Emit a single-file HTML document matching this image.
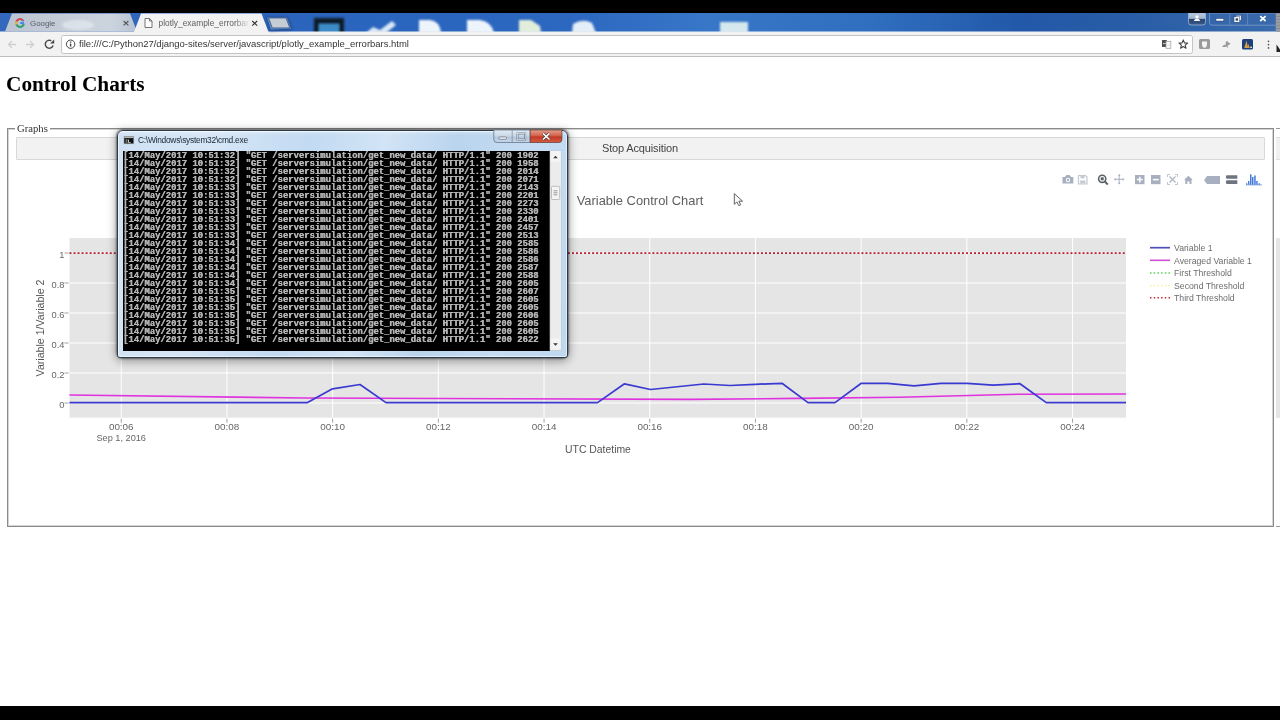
<!DOCTYPE html>
<html><head><meta charset="utf-8">
<style>
*{margin:0;padding:0;box-sizing:border-box}
html,body{width:1280px;height:720px;overflow:hidden;background:#fff;font-family:"Liberation Sans",sans-serif}
.a{position:absolute;will-change:transform}
#topbar{left:0;top:0;width:1280px;height:13px;background:#000}
#botbar{left:0;top:706px;width:1280px;height:14px;background:#000}
#chrome{left:0;top:13px;width:1280px;height:44px}
#page{left:0;top:57px;width:1280px;height:649px;background:#fff}
.url{left:79.2px;top:37px;font-size:9.48px;color:#333;white-space:nowrap;line-height:14px}
</style></head><body>
<div id="topbar" class="a"></div>
<svg id="chrome" class="a" width="1280" height="44" viewBox="0 13 1280 44">
 <defs>
  <linearGradient id="bl" x1="0" x2="1" y1="0" y2="0">
   <stop offset="0" stop-color="#3468bc"/><stop offset="0.25" stop-color="#2a64bc"/><stop offset="0.45" stop-color="#2c68c0"/>
   <stop offset="0.55" stop-color="#3876c8"/><stop offset="0.68" stop-color="#306ec0"/><stop offset="0.8" stop-color="#2258a8"/><stop offset="0.9" stop-color="#2a5ea6"/><stop offset="1" stop-color="#3a6cae"/>
  </linearGradient>
  <linearGradient id="gt" x1="0" x2="1" y1="0" y2="0">
   <stop offset="0" stop-color="#bcc4d2"/><stop offset="0.4" stop-color="#c4ccd8"/><stop offset="0.6" stop-color="#c8d0dc"/><stop offset="0.8" stop-color="#ccd4de"/><stop offset="1" stop-color="#b8c2d2"/>
  </linearGradient>
  <linearGradient id="fade" x1="0" x2="1">
   <stop offset="0.8" stop-color="#606060" stop-opacity="1"/><stop offset="0.97" stop-color="#606060" stop-opacity="0"/>
  </linearGradient>
 </defs>
 <rect x="0" y="13" width="1280" height="19" fill="url(#bl)"/>
 <!-- desktop blobs -->
 <filter id="bz" x="-20%" y="-20%" width="140%" height="140%"><feGaussianBlur stdDeviation="1.1"/></filter>
 <g filter="url(#bz)">
 <rect x="314" y="18" width="30" height="15" fill="#101c2c"/>
 <rect x="319" y="24" width="20" height="9" fill="#3c8cc8"/>
 <path d="M366 33 L373 27 L380 30 L392 21 L396 25 L386 33 Z" fill="#dce8f6"/>
 <path d="M419 33 L419 20 L430 20 Q440 21 441 33 Z" fill="#eef4fb"/>
 <path d="M467 33 L467 20 L480 20 Q492 22 494 33 Z" fill="#eef4fb"/>
 <path d="M519 33 L519 20 L531 20 L540 26 L541 33 Z" fill="#e2eedc"/>
 <path d="M572 33 L573 24 Q583 18 592 23 L596 33 Z" fill="#e4eef8"/>
 <rect x="720" y="22" width="28" height="11" fill="#d4e8ee"/>
 </g>
 <!-- toolbar -->
 <rect x="0" y="31.5" width="1280" height="25" fill="#f2f2f2"/>
 <rect x="0" y="56" width="1280" height="1" fill="#bdbdbd"/>
 <rect x="61.5" y="35.5" width="1131" height="18" rx="2" fill="#fff" stroke="#c4c4c4" stroke-width="1"/>
 <!-- google tab -->
 <path d="M5 31.5 L12 13.5 L130 13.5 L137 31.5 Z" fill="url(#gt)"/>
 <ellipse cx="78" cy="25" rx="16" ry="5" fill="#e4eaf0" opacity="0.7" filter="url(#bz)"/>
 <!-- active tab -->
 <path d="M134 32 L141 13.5 L261.5 13.5 L268.5 32 Z" fill="#f2f2f2"/>
 <!-- new tab -->
 <path d="M265.5 16.5 L288 16.5 L292.5 30 L270 31.5 Z" fill="#1e3c70" opacity="0.55" filter="url(#bz)"/>
 <path d="M267 17.5 L287 17.5 L291 28.8 L270.8 29.5 Z" fill="#7fa6d8" opacity="0.7"/>
 <path d="M268.6 18 L286 18 L289.8 27.9 L272.3 27.9 Z" fill="#c6ccd6" stroke="#2a4a80" stroke-width="0.7"/>
 <!-- google icon -->
 <g transform="translate(20,23)" fill="none" stroke-width="1.9">
  <path d="M3.6 -1.6 A3.9 3.9 0 1 0 3.9 0.6" stroke="#4285f4"/>
  <path d="M-3.6 -1.5 A3.9 3.9 0 0 1 2.8 -2.7" stroke="#ea4335"/>
  <path d="M-3.5 1.7 A3.9 3.9 0 0 1 -3.6 -1.5" stroke="#fbbc05"/>
  <path d="M3.7 1.2 A3.9 3.9 0 0 1 -3.5 1.7" stroke="#34a853"/>
  <path d="M0.2 0 H3.9" stroke="#4285f4"/>
 </g>
 <text x="30" y="26" font-size="7.9" fill="#5a5e66" font-family="Liberation Sans">Google</text>
 <path d="M123.6 21 L128.4 25.4 M128.4 21 L123.6 25.4" stroke="#555" stroke-width="1.1"/>
 <!-- active tab contents -->
 <path d="M145 18.5 H149.5 L152 21 V27.5 H145 Z M149.5 18.5 V21 H152" fill="#fff" stroke="#666" stroke-width="0.9"/>
 <text x="158.5" y="26" font-size="8.4" fill="url(#fade)" font-family="Liberation Sans">plotly_example_errorbars</text>
 <path d="M252.2 21 L257.2 25.6 M257.2 21 L252.2 25.6" stroke="#333" stroke-width="1.1"/>
 <!-- nav -->
 <path d="M16 44.5 H8.8 M12 41 L8.5 44.5 L12 48" fill="none" stroke="#d0d0d0" stroke-width="1.4"/>
 <path d="M26 44.5 H33.2 M30 41 L33.5 44.5 L30 48" fill="none" stroke="#d0d0d0" stroke-width="1.4"/>
 <path d="M53.06 45.57 A4 4 0 1 1 51.3 40.74" fill="none" stroke="#464646" stroke-width="1.4"/>
 <path d="M50.2 43.4 L54.2 43.4 L54.2 39.4 Z" fill="#464646"/>
 <circle cx="70.6" cy="44.2" r="4.2" fill="none" stroke="#444" stroke-width="1.0"/>
 <rect x="69.9" y="43.6" width="1.4" height="3" fill="#444"/><rect x="69.9" y="41.5" width="1.4" height="1.2" fill="#444"/>
 <!-- right icons -->
 <rect x="1162" y="40" width="4.8" height="7" fill="#505050"/>
 <rect x="1166" y="41.3" width="4.8" height="7" fill="#fafafa" stroke="#999" stroke-width="0.7"/><path d="M1163 43.5 h2.8 M1167 45 h3" stroke="#ddd" stroke-width="0.8"/>
 <path d="M1183.30 39.90 L1184.48 42.88 L1187.67 43.08 L1185.20 45.12 L1186.00 48.22 L1183.30 46.50 L1180.60 48.22 L1181.40 45.12 L1178.93 43.08 L1182.12 42.88 Z" fill="none" stroke="#444" stroke-width="1.1" stroke-linejoin="round"/>
 <rect x="1199" y="39" width="11" height="10" rx="1.5" fill="#9a9a9a"/>
 <path d="M1202 41.5 H1207 V44.5 Q1207 47 1204.5 48 Q1202 47 1202 44.5 Z" fill="#f4f4f4"/>
 <path d="M1222 46.5 Q1224.5 44 1226 44.5 L1225.5 42 Q1227.5 40.5 1228.5 42.5 L1230.5 43.5 Q1229 45.5 1227.5 45.5 L1228 48 L1226 46.5 Q1224 47.5 1222 46.5 Z" fill="#9a9a9a"/>
 <rect x="1242" y="39" width="11" height="10.5" rx="1.5" fill="#1f3f78"/>
 <path d="M1244.3 48 L1246.5 40.5 L1248.2 48 Z M1247.6 48 L1248.6 43.5 L1249.6 48 Z" fill="#d8a040"/><rect x="1250.3" y="46.6" width="1.6" height="1.4" fill="#eee"/>
 <circle cx="1268.5" cy="41.3" r="0.85" fill="#555"/><circle cx="1268.5" cy="44.6" r="0.85" fill="#555"/><circle cx="1268.5" cy="47.9" r="0.85" fill="#555"/>
 <path d="M1276.5 44.5 L1280 49.5 L1280 52 L1276.5 52 Z" fill="#222"/>
 <!-- window controls -->
 <defs><linearGradient id="pb" x1="0" x2="0" y1="0" y2="1"><stop offset="0" stop-color="#b8c8dc"/><stop offset="0.45" stop-color="#a4b8d0"/><stop offset="0.5" stop-color="#2a4470"/><stop offset="1" stop-color="#3a5a88"/></linearGradient></defs>
 <path d="M1188.5 13 L1205.5 13 L1205.5 22.5 Q1205.5 25 1203 25 L1191 25 Q1188.5 25 1188.5 22.5 Z" fill="url(#pb)" stroke="#9fb8d8" stroke-width="0.8"/>
 <circle cx="1197" cy="16.9" r="1.6" fill="#fff"/>
 <path d="M1193.8 21 Q1194.5 18.8 1197 18.8 Q1199.5 18.8 1200.2 21 Z" fill="#fff"/>
 <path d="M1209.5 13 L1280 13 L1280 25.2 L1212 25.2 Q1209.5 25.2 1209.5 22.7 Z" fill="#3a68a8" fill-opacity="0.5" stroke="#86a6d0" stroke-width="0.7"/>
 <line x1="1229.8" y1="13.5" x2="1229.8" y2="24.8" stroke="#7c9cc8" stroke-width="0.6"/>
 <line x1="1247.6" y1="13.5" x2="1247.6" y2="24.8" stroke="#7c9cc8" stroke-width="0.6"/>
 <rect x="1216" y="18.6" width="7.8" height="2.4" fill="#f4f8fc" stroke="#1e3a60" stroke-width="0.4"/>
 <rect x="1236" y="15.2" width="5.2" height="5.2" fill="#dfe8f2" stroke="#203a60" stroke-width="0.4"/>
 <rect x="1234" y="16.8" width="5.6" height="5.4" fill="#eef3f8" stroke="#203a60" stroke-width="0.4"/>
 <rect x="1235.7" y="18.4" width="2.3" height="2.2" fill="#2a3a50"/>
 <path d="M1260.2 16.2 L1265.6 21 M1265.6 16.2 L1260.2 21" stroke="#fff" stroke-width="1.7"/>
 <rect x="1275.7" y="13" width="4.3" height="18.5" fill="#8a8e94"/><path d="M1276 15h4M1276 18h4M1276 21h4M1276 24h4M1276 27h4M1276 30h4" stroke="#a8acb0" stroke-width="1"/>
</svg>
<div id="page" class="a"></div>
<div class="a url">file:///C:/Python27/django-sites/server/javascript/plotly_example_errorbars.html</div>
<div class="a" style="left:6px;top:72px;font-family:'Liberation Serif',serif;font-weight:bold;font-size:21.3px;line-height:24px;color:#000;white-space:nowrap">Control Charts</div>
<div class="a" style="left:7px;top:128px;width:1267px;height:399px;border:1px solid #8a8a8a;box-shadow:inset 0 0 0 1px #d4d4d4"></div>
<div class="a" style="left:15px;top:121px;padding:0 2px;background:#fff;font-family:'Liberation Serif',serif;font-size:10.7px;line-height:14px;color:#333;white-space:nowrap">Graphs</div>
<div class="a" style="left:16px;top:137px;width:1249px;height:23px;background:#f2f2f2;border:1px solid #d8d8d8;border-radius:1px"></div>
<div class="a" style="left:602px;top:141px;font-size:11px;line-height:14px;color:#444;white-space:nowrap;letter-spacing:-0.15px">Stop Acquisition</div>
<div class="a" style="left:1276px;top:128px;width:4px;height:1px;background:#999"></div>
<div class="a" style="left:1276px;top:526px;width:4px;height:1px;background:#999"></div>
<div class="a" style="left:1276px;top:137px;width:4px;height:23px;background:#f0f0f0;border-top:1px solid #ddd;border-bottom:1px solid #ddd"></div>
<div class="a" style="left:1276px;top:238px;width:4px;height:180px;background:#e5e5e5"></div>
<svg class="a" style="left:0;top:0" width="1280" height="720" viewBox="0 0 1280 720">
<rect x="69.5" y="238" width="1056.5" height="179.7" fill="#e5e5e5"/>
<line x1="121.25" y1="238" x2="121.25" y2="417.7" stroke="#fff" stroke-width="1"/>
<line x1="121.25" y1="418.7" x2="121.25" y2="422.7" stroke="#444" stroke-width="1" opacity="0.5"/>
<line x1="226.95" y1="238" x2="226.95" y2="417.7" stroke="#fff" stroke-width="1"/>
<line x1="226.95" y1="418.7" x2="226.95" y2="422.7" stroke="#444" stroke-width="1" opacity="0.5"/>
<line x1="332.65" y1="238" x2="332.65" y2="417.7" stroke="#fff" stroke-width="1"/>
<line x1="332.65" y1="418.7" x2="332.65" y2="422.7" stroke="#444" stroke-width="1" opacity="0.5"/>
<line x1="438.35" y1="238" x2="438.35" y2="417.7" stroke="#fff" stroke-width="1"/>
<line x1="438.35" y1="418.7" x2="438.35" y2="422.7" stroke="#444" stroke-width="1" opacity="0.5"/>
<line x1="544.05" y1="238" x2="544.05" y2="417.7" stroke="#fff" stroke-width="1"/>
<line x1="544.05" y1="418.7" x2="544.05" y2="422.7" stroke="#444" stroke-width="1" opacity="0.5"/>
<line x1="649.75" y1="238" x2="649.75" y2="417.7" stroke="#fff" stroke-width="1"/>
<line x1="649.75" y1="418.7" x2="649.75" y2="422.7" stroke="#444" stroke-width="1" opacity="0.5"/>
<line x1="755.45" y1="238" x2="755.45" y2="417.7" stroke="#fff" stroke-width="1"/>
<line x1="755.45" y1="418.7" x2="755.45" y2="422.7" stroke="#444" stroke-width="1" opacity="0.5"/>
<line x1="861.15" y1="238" x2="861.15" y2="417.7" stroke="#fff" stroke-width="1"/>
<line x1="861.15" y1="418.7" x2="861.15" y2="422.7" stroke="#444" stroke-width="1" opacity="0.5"/>
<line x1="966.85" y1="238" x2="966.85" y2="417.7" stroke="#fff" stroke-width="1"/>
<line x1="966.85" y1="418.7" x2="966.85" y2="422.7" stroke="#444" stroke-width="1" opacity="0.5"/>
<line x1="1072.55" y1="238" x2="1072.55" y2="417.7" stroke="#fff" stroke-width="1"/>
<line x1="1072.55" y1="418.7" x2="1072.55" y2="422.7" stroke="#444" stroke-width="1" opacity="0.5"/>
<line x1="69.5" y1="403.00" x2="1126" y2="403.00" stroke="#fff" stroke-width="1"/>
<line x1="64.5" y1="403.00" x2="68.5" y2="403.00" stroke="#444" stroke-width="1" opacity="0.5"/>
<text x="64.5" y="406.30" text-anchor="end" font-size="9.3" fill="#666" dy="1.2">0</text>
<line x1="69.5" y1="373.00" x2="1126" y2="373.00" stroke="#fff" stroke-width="1"/>
<line x1="64.5" y1="373.00" x2="68.5" y2="373.00" stroke="#444" stroke-width="1" opacity="0.5"/>
<text x="64.5" y="376.30" text-anchor="end" font-size="9.3" fill="#666" dy="1.2">0.2</text>
<line x1="69.5" y1="343.00" x2="1126" y2="343.00" stroke="#fff" stroke-width="1"/>
<line x1="64.5" y1="343.00" x2="68.5" y2="343.00" stroke="#444" stroke-width="1" opacity="0.5"/>
<text x="64.5" y="346.30" text-anchor="end" font-size="9.3" fill="#666" dy="1.2">0.4</text>
<line x1="69.5" y1="313.00" x2="1126" y2="313.00" stroke="#fff" stroke-width="1"/>
<line x1="64.5" y1="313.00" x2="68.5" y2="313.00" stroke="#444" stroke-width="1" opacity="0.5"/>
<text x="64.5" y="316.30" text-anchor="end" font-size="9.3" fill="#666" dy="1.2">0.6</text>
<line x1="69.5" y1="283.00" x2="1126" y2="283.00" stroke="#fff" stroke-width="1"/>
<line x1="64.5" y1="283.00" x2="68.5" y2="283.00" stroke="#444" stroke-width="1" opacity="0.5"/>
<text x="64.5" y="286.30" text-anchor="end" font-size="9.3" fill="#666" dy="1.2">0.8</text>
<line x1="69.5" y1="253.00" x2="1126" y2="253.00" stroke="#fff" stroke-width="1"/>
<line x1="64.5" y1="253.00" x2="68.5" y2="253.00" stroke="#444" stroke-width="1" opacity="0.5"/>
<text x="64.5" y="256.30" text-anchor="end" font-size="9.3" fill="#666" dy="1.2">1</text>
<text x="121.25" y="429.7" text-anchor="middle" font-size="9.9" fill="#666">00:06</text>
<text x="226.95" y="429.7" text-anchor="middle" font-size="9.9" fill="#666">00:08</text>
<text x="332.65" y="429.7" text-anchor="middle" font-size="9.9" fill="#666">00:10</text>
<text x="438.35" y="429.7" text-anchor="middle" font-size="9.9" fill="#666">00:12</text>
<text x="544.05" y="429.7" text-anchor="middle" font-size="9.9" fill="#666">00:14</text>
<text x="649.75" y="429.7" text-anchor="middle" font-size="9.9" fill="#666">00:16</text>
<text x="755.45" y="429.7" text-anchor="middle" font-size="9.9" fill="#666">00:18</text>
<text x="861.15" y="429.7" text-anchor="middle" font-size="9.9" fill="#666">00:20</text>
<text x="966.85" y="429.7" text-anchor="middle" font-size="9.9" fill="#666">00:22</text>
<text x="1072.55" y="429.7" text-anchor="middle" font-size="9.9" fill="#666">00:24</text>
<text x="121.2" y="440.8" text-anchor="middle" font-size="9.2" fill="#666">Sep 1, 2016</text>
<text x="598" y="453" text-anchor="middle" font-size="10.4" fill="#555">UTC Datetime</text>
<text transform="translate(44,328) rotate(-90)" text-anchor="middle" font-size="10.6" fill="#555">Variable 1/Variable 2</text>
<text x="640" y="205" text-anchor="middle" font-size="12.9" fill="#5e5e5e">Variable Control Chart</text>
<line x1="69.5" y1="253.1" x2="1126" y2="253.1" stroke="#b82030" stroke-width="1.9" stroke-dasharray="2 2.02"/>
<polyline fill="none" stroke="#e033e0" stroke-width="1.6" points="69.5,395 305,398 690,399.4 800,398.4 900,397.2 1020,394.2 1126,394"/>
<polyline fill="none" stroke="#3a3ad0" stroke-width="1.7" stroke-linejoin="round" points="69.5,402.6 307.5,402.6 332.5,388.8 360,384.5 386,402.6 597.5,402.6 624.5,383.8 650.5,389.5 703.8,384 730,385.5 755,384.3 782,383.3 808,402.6 835,402.6 861.3,383.3 887.5,383.3 914,385.8 941,383.4 967,383.4 993,385.2 1020,383.7 1046.3,402.6 1126,402.6"/>
<line x1="1150" y1="247.7" x2="1170" y2="247.7" stroke="#5050b8" stroke-width="1.7"/>
<line x1="1150" y1="260.3" x2="1170" y2="260.3" stroke="#d050d8" stroke-width="1.6"/>
<line x1="1150" y1="273" x2="1170" y2="273" stroke="#58d058" stroke-width="1.4" stroke-dasharray="1.5 2.2"/>
<line x1="1150" y1="285.6" x2="1170" y2="285.6" stroke="#f4f090" stroke-width="1.4" stroke-dasharray="1.5 2.2"/>
<line x1="1150" y1="297.8" x2="1170" y2="297.8" stroke="#c83038" stroke-width="1.5" stroke-dasharray="1.5 2.2"/>
<text x="1174" y="250.9" font-size="8.7" fill="#6c6c6c">Variable 1</text>
<text x="1174" y="263.5" font-size="8.7" fill="#6c6c6c">Averaged Variable 1</text>
<text x="1174" y="276.2" font-size="8.7" fill="#6c6c6c">First Threshold</text>
<text x="1174" y="288.8" font-size="8.7" fill="#6c6c6c">Second Threshold</text>
<text x="1174" y="301.0" font-size="8.7" fill="#6c6c6c">Third Threshold</text>
</svg>
<svg class="a" style="left:0;top:0" width="1280" height="720" viewBox="0 0 1280 720">
 <!-- camera -->
 <path d="M1062.5 177 H1065 L1066.5 175 H1069.5 L1071 177 H1073.3 V183.5 H1062.5 Z" fill="#a8b0c0"/>
 <circle cx="1068" cy="180" r="2.2" fill="#fff"/><circle cx="1068" cy="180" r="1.2" fill="#a8b0c0"/>
 <!-- save -->
 <path d="M1078.5 175.5 H1085.5 L1087 177 V184 H1078.5 Z" fill="none" stroke="#c4c8d0" stroke-width="1.2"/>
 <rect x="1080.5" y="175.8" width="4" height="2.5" fill="#c4c8d0"/><rect x="1080.2" y="180.5" width="5.2" height="3" fill="#c4c8d0"/>
 <!-- zoom -->
 <circle cx="1102.2" cy="178.8" r="3.6" fill="none" stroke="#5c6068" stroke-width="1.6"/>
 <rect x="1100.7" y="177.3" width="3" height="3" fill="#5c6068"/>
 <path d="M1104.8 181.5 L1107.8 184.5" stroke="#5c6068" stroke-width="1.9"/>
 <!-- pan -->
 <path d="M1119.2 174.5 V184 M1114.5 179.3 H1124" stroke="#a8b0c0" stroke-width="1"/>
 <path d="M1119.2 174 L1117.8 175.8 H1120.6 Z M1119.2 184.5 L1117.8 182.7 H1120.6 Z M1114 179.3 L1115.8 177.9 V180.7 Z M1124.5 179.3 L1122.7 177.9 V180.7 Z" fill="#a8b0c0"/>
 <!-- zoom in -->
 <rect x="1135" y="175" width="9.5" height="9.2" fill="#a8b0c0"/>
 <path d="M1139.75 176.8 V182.4 M1136.9 179.6 H1142.6" stroke="#fff" stroke-width="1.5"/>
 <!-- zoom out -->
 <rect x="1151" y="175" width="9.5" height="9.2" fill="#a8b0c0"/>
 <path d="M1152.9 179.6 H1158.6" stroke="#fff" stroke-width="1.5"/>
 <!-- autoscale -->
 <path d="M1167.5 177 V174.5 H1170 M1175 174.5 H1177.5 V177 M1177.5 182 V184.5 H1175 M1170 184.5 H1167.5 V182" fill="none" stroke="#b8bec8" stroke-width="0.9"/>
 <path d="M1169.5 176.5 L1175.5 182.5 M1175.5 176.5 L1169.5 182.5" stroke="#b0b8c4" stroke-width="1.3"/>
 <!-- home -->
 <path d="M1184 180 L1188.4 175.8 L1192.8 180 H1191.5 V184 H1189.5 V181.5 H1187.3 V184 H1185.3 V180 Z" fill="#a8b0c0"/>
 <!-- spike/tag -->
 <path d="M1204 180.2 L1207 176 H1220 V184 H1207 Z" fill="#a8b0c0"/>
 <!-- compare -->
 <path d="M1226.5 175.3 H1237.3 V178.8 H1226.5 L1225.8 177 Z M1226.5 180.3 H1237.3 V184 H1226.5 L1225.8 182.2 Z" fill="#6e7480"/>
 <!-- plotly logo -->
 <g fill="#447adb">
  <rect x="1246" y="183.3" width="1.4" height="1.5"/>
  <rect x="1248" y="181" width="1.4" height="3.8"/>
  <rect x="1250" y="174.3" width="1.5" height="10.5"/>
  <rect x="1252" y="177" width="1.5" height="7.8"/>
  <rect x="1254.2" y="175.5" width="1.5" height="9.3"/>
  <rect x="1256.2" y="181" width="1.4" height="3.8"/>
  <rect x="1258.5" y="183.3" width="1.4" height="1.5"/>
 </g>
 <rect x="1246" y="184.5" width="16" height="0.8" fill="#6a90d8"/>
 <!-- cursor -->
 <path d="M734.3 193.6 V204.3 L736.9 202 L738.8 205.6 L740.7 204.8 L738.9 201.2 H742.6 Z" fill="#f8f8f8" stroke="#555" stroke-width="0.9" stroke-linejoin="round"/>
</svg>
<div class="a" style="left:117px;top:129.5px;width:451px;height:227.5px;border-radius:6px;box-shadow:0 0 2px 1px rgba(0,0,0,0.45),0 2px 8px 2px rgba(0,0,0,0.3)"></div>
<div class="a" style="left:117px;top:129.5px;width:451px;height:227.5px;border-radius:6px 6px 3px 3px;border:1px solid #2c3a4a;background:linear-gradient(180deg,rgba(255,255,255,0.35) 0px,rgba(255,255,255,0) 4px),linear-gradient(100deg,#cfe1f3 0%,#d6e6f6 20%,#c2daf2 40%,#d2e4f6 55%,#bad4ee 70%,#c6ddf3 85%,#bed8f0 100%)"></div>
<div class="a" style="left:118px;top:130.5px;width:449px;height:225.5px;border-radius:5px 5px 2px 2px;border:1px solid rgba(255,255,255,0.55)"></div>
<div class="a" style="left:123px;top:150.5px;width:427px;height:200px;background:#000"></div>
<svg class="a" style="left:0;top:0" width="1280" height="720" viewBox="0 0 1280 720">
 <rect x="124" y="136.3" width="9.8" height="7.5" fill="#111" stroke="#9aa" stroke-width="0.6"/>
 <rect x="124.3" y="136.6" width="9.2" height="1.5" fill="#bbb"/>
 <path d="M125.5 140 h2 M125.5 142 h2 M128.5 139.5 v3 h2" stroke="#eee" stroke-width="0.8" fill="none"/>
 <!-- buttons -->
 <defs>
  <linearGradient id="gb" x1="0" x2="0" y1="0" y2="1"><stop offset="0" stop-color="#e2ecf6"/><stop offset="0.5" stop-color="#c8d6e6"/><stop offset="0.55" stop-color="#b4c6da"/><stop offset="1" stop-color="#c4d6ea"/></linearGradient>
  <linearGradient id="rb" x1="0" x2="0" y1="0" y2="1"><stop offset="0" stop-color="#e8a090"/><stop offset="0.45" stop-color="#d2624c"/><stop offset="0.55" stop-color="#c23a26"/><stop offset="1" stop-color="#d85a40"/></linearGradient>
 </defs>
 <path d="M493.8 130 H530.2 V142.5 H497 Q493.8 142.5 493.8 139.5 Z" fill="url(#gb)" stroke="#5a6a80" stroke-width="0.7"/>
 <line x1="512.2" y1="130.2" x2="512.2" y2="142.3" stroke="#6a7a90" stroke-width="0.6"/>
 <path d="M530.2 130 H561.9 V139.5 Q561.9 142.5 558.9 142.5 H530.2 Z" fill="url(#rb)" stroke="#5a3a30" stroke-width="0.7"/>
 <rect x="499" y="137" width="7.5" height="2.2" rx="0.5" fill="#fff" stroke="#44546a" stroke-width="0.6"/>
 <rect x="517.5" y="133.5" width="7.8" height="6" fill="none" stroke="#44546a" stroke-width="1.6"/>
 <rect x="517.5" y="133.5" width="7.8" height="6" fill="none" stroke="#fff" stroke-width="0.7"/>
 <path d="M543 133.3 L549.5 139.5 M549.5 133.3 L543 139.5" stroke="#3a2a2a" stroke-width="2.6"/>
 <path d="M543 133.3 L549.5 139.5 M549.5 133.3 L543 139.5" stroke="#fff" stroke-width="1.6"/>
 <!-- scrollbar -->
 <rect x="550" y="150.5" width="11.5" height="200" fill="#ececec" stroke="#b8c4d0" stroke-width="0.6"/>
 <rect x="550.5" y="151" width="10" height="11" fill="#f4f4f4"/>
 <rect x="550.5" y="338.5" width="10" height="11" fill="#f4f4f4"/>
 <path d="M553.2 158.3 L555.5 155.8 L557.8 158.3 Z" fill="#333"/>
 <path d="M553.2 343.2 L555.5 345.7 L557.8 343.2 Z" fill="#333"/>
 <rect x="551.5" y="186.3" width="8.2" height="13.2" rx="1" fill="#f4f4f4" stroke="#a8a8a8" stroke-width="0.7"/>
 <path d="M553.5 190.8 h4 M553.5 192.8 h4 M553.5 194.8 h4" stroke="#777" stroke-width="0.7"/>
</svg>
<div class="a" style="left:137.5px;top:134.5px;font-size:8.4px;line-height:10px;letter-spacing:-0.26px;color:#1a2430;white-space:nowrap">C:\Windows\system32\cmd.exe</div>
<pre class="a" style="left:123.3px;top:152px;font-family:'Liberation Mono',monospace;font-weight:bold;font-size:8.88px;line-height:8px;color:#b4b4b4;text-shadow:0.4px 0 0 #b4b4b4;white-space:pre">[14/May/2017 10:51:32] &quot;GET /serversimulation/get_new_data/ HTTP/1.1&quot; 200 1902
[14/May/2017 10:51:32] &quot;GET /serversimulation/get_new_data/ HTTP/1.1&quot; 200 1958
[14/May/2017 10:51:32] &quot;GET /serversimulation/get_new_data/ HTTP/1.1&quot; 200 2014
[14/May/2017 10:51:32] &quot;GET /serversimulation/get_new_data/ HTTP/1.1&quot; 200 2071
[14/May/2017 10:51:33] &quot;GET /serversimulation/get_new_data/ HTTP/1.1&quot; 200 2143
[14/May/2017 10:51:33] &quot;GET /serversimulation/get_new_data/ HTTP/1.1&quot; 200 2201
[14/May/2017 10:51:33] &quot;GET /serversimulation/get_new_data/ HTTP/1.1&quot; 200 2273
[14/May/2017 10:51:33] &quot;GET /serversimulation/get_new_data/ HTTP/1.1&quot; 200 2330
[14/May/2017 10:51:33] &quot;GET /serversimulation/get_new_data/ HTTP/1.1&quot; 200 2401
[14/May/2017 10:51:33] &quot;GET /serversimulation/get_new_data/ HTTP/1.1&quot; 200 2457
[14/May/2017 10:51:33] &quot;GET /serversimulation/get_new_data/ HTTP/1.1&quot; 200 2513
[14/May/2017 10:51:34] &quot;GET /serversimulation/get_new_data/ HTTP/1.1&quot; 200 2585
[14/May/2017 10:51:34] &quot;GET /serversimulation/get_new_data/ HTTP/1.1&quot; 200 2586
[14/May/2017 10:51:34] &quot;GET /serversimulation/get_new_data/ HTTP/1.1&quot; 200 2586
[14/May/2017 10:51:34] &quot;GET /serversimulation/get_new_data/ HTTP/1.1&quot; 200 2587
[14/May/2017 10:51:34] &quot;GET /serversimulation/get_new_data/ HTTP/1.1&quot; 200 2588
[14/May/2017 10:51:34] &quot;GET /serversimulation/get_new_data/ HTTP/1.1&quot; 200 2605
[14/May/2017 10:51:35] &quot;GET /serversimulation/get_new_data/ HTTP/1.1&quot; 200 2607
[14/May/2017 10:51:35] &quot;GET /serversimulation/get_new_data/ HTTP/1.1&quot; 200 2605
[14/May/2017 10:51:35] &quot;GET /serversimulation/get_new_data/ HTTP/1.1&quot; 200 2605
[14/May/2017 10:51:35] &quot;GET /serversimulation/get_new_data/ HTTP/1.1&quot; 200 2606
[14/May/2017 10:51:35] &quot;GET /serversimulation/get_new_data/ HTTP/1.1&quot; 200 2605
[14/May/2017 10:51:35] &quot;GET /serversimulation/get_new_data/ HTTP/1.1&quot; 200 2605
[14/May/2017 10:51:35] &quot;GET /serversimulation/get_new_data/ HTTP/1.1&quot; 200 2622</pre>
<div id="botbar" class="a"></div>
</body></html>
